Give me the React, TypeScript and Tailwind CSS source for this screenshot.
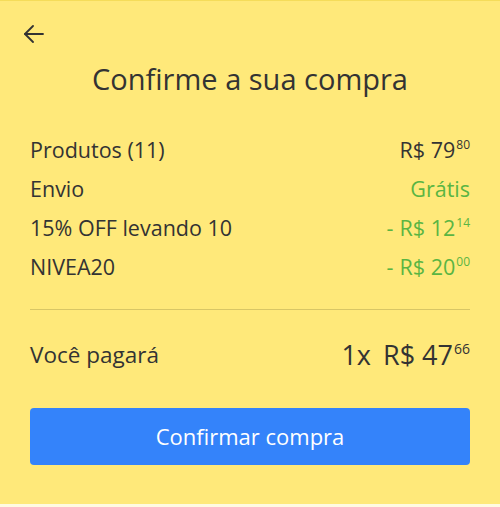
import React from "react";

const Price = ({ int, cents, prefix }: { int: string; cents: string; prefix?: string }) => (
    <span className="flex items-start">
        {prefix ? <span className="mr-[6px]">{prefix}</span> : null}
        <span>R$ {int}</span>
        <span className="text-[12px] leading-none mt-[5px] ml-[1px]">{cents}</span>
    </span>
);

const rows = [
    { label: "Produtos (11)", value: <Price int="79" cents="80" />, green: false },
    { label: "Envio", value: <span>Grátis</span>, green: true },
    { label: "15% OFF levando 10", value: <Price prefix="-" int="12" cents="14" />, green: true },
    { label: "NIVEA20", value: <Price prefix="-" int="20" cents="00" />, green: true },
];

const App = () => {
    return (
        <div className="w-[500px] h-[507px] flex flex-col bg-[#fffbe1] font-['Open_Sans',sans-serif] text-[#333333]">
            <div className="h-[504px] flex flex-col bg-[#ffe97a] border-t border-[#f5dc5a] px-[30px]">
                <div className="pt-[23px] h-[46px] -ml-[6px]">
                    <svg width="20" height="20" viewBox="0 0 20 20" fill="none" stroke="#333" strokeWidth="1.8" strokeLinecap="round" strokeLinejoin="round">
                        <path d="M19 10H1" />
                        <path d="M9 2L1 10l8 8" />
                    </svg>
                </div>
                <h1 className="text-center text-[29px] leading-[32px] mt-[16px] mb-[36px]">
                    Confirme a sua compra
                </h1>
                <div className="flex flex-col">
                    {rows.map((row) => (
                        <div key={row.label} className="flex justify-between items-center h-[39px] text-[21.5px]">
                            <span>{row.label}</span>
                            <span className={row.green ? "text-[#5ab543]" : ""}>{row.value}</span>
                        </div>
                    ))}
                </div>
                <hr className="mt-[22px] h-px border-0 bg-[#d8c665]" />
                <div className="flex justify-between items-center h-[90px]">
                    <span className="text-[22.5px]">Você pagará</span>
                    <span className="flex items-start text-[27px]">
                        <span className="mr-[12px]">1x</span>
                        <span>R$ 47</span>
                        <span className="text-[14px] leading-none mt-[7px] ml-[1px]">66</span>
                    </span>
                </div>
                <button className="mt-[8px] h-[57px] w-full rounded-[4px] bg-[#3483fa] text-white text-[22px]">
                    Confirmar compra
                </button>
            </div>
        </div>
    );
};

export default App;
